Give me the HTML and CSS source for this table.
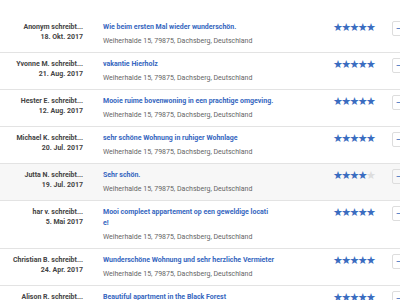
FILE: index.html
```html
<!DOCTYPE html>
<html lang="de">
<head>
    <meta charset="UTF-8">
    <meta name="viewport" content="width=device-width, initial-scale=1.0">
    <title>Bewertungen</title>
    <link rel="stylesheet" href="styles.css">
</head>
<body>
    <div class="reviews">
        <div class="review">
            <div class="author">
                <div class="name">Anonym schreibt...</div>
                <div class="date">18. Okt. 2017</div>
            </div>
            <div class="content">
                <div class="title">Wie beim ersten Mal wieder wunderschön.</div>
                <div class="address">Weiherhalde 15, 79875, Dachsberg, Deutschland</div>
            </div>
            <div class="rating">★★★★★</div>
            <div class="more">→</div>
        </div>
        <div class="review">
            <div class="author">
                <div class="name">Yvonne M. schreibt...</div>
                <div class="date">21. Aug. 2017</div>
            </div>
            <div class="content">
                <div class="title">vakantie Hierholz</div>
                <div class="address">Weiherhalde 15, 79875, Dachsberg, Deutschland</div>
            </div>
            <div class="rating">★★★★★</div>
            <div class="more">→</div>
        </div>
        <div class="review">
            <div class="author">
                <div class="name">Hester E. schreibt...</div>
                <div class="date">12. Aug. 2017</div>
            </div>
            <div class="content">
                <div class="title">Mooie ruime bovenwoning in een prachtige omgeving.</div>
                <div class="address">Weiherhalde 15, 79875, Dachsberg, Deutschland</div>
            </div>
            <div class="rating">★★★★★</div>
            <div class="more">→</div>
        </div>
        <div class="review">
            <div class="author">
                <div class="name">Michael K. schreibt...</div>
                <div class="date">20. Jul. 2017</div>
            </div>
            <div class="content">
                <div class="title">sehr schöne Wohnung in ruhiger Wohnlage</div>
                <div class="address">Weiherhalde 15, 79875, Dachsberg, Deutschland</div>
            </div>
            <div class="rating">★★★★★</div>
            <div class="more">→</div>
        </div>
        <div class="review hover">
            <div class="author">
                <div class="name">Jutta N. schreibt...</div>
                <div class="date">19. Jul. 2017</div>
            </div>
            <div class="content">
                <div class="title">Sehr schön.</div>
                <div class="address">Weiherhalde 15, 79875, Dachsberg, Deutschland</div>
            </div>
            <div class="rating">★★★★<span class="off">★</span></div>
            <div class="more">→</div>
        </div>
        <div class="review">
            <div class="author">
                <div class="name">har v. schreibt...</div>
                <div class="date">5. Mai 2017</div>
            </div>
            <div class="content">
                <div class="title narrow">Mooi compleet appartement op een geweldige locatie!</div>
                <div class="address">Weiherhalde 15, 79875, Dachsberg, Deutschland</div>
            </div>
            <div class="rating">★★★★★</div>
            <div class="more">→</div>
        </div>
        <div class="review">
            <div class="author">
                <div class="name">Christian B. schreibt...</div>
                <div class="date">24. Apr. 2017</div>
            </div>
            <div class="content">
                <div class="title">Wunderschöne Wohnung und sehr herzliche Vermieter</div>
                <div class="address">Weiherhalde 15, 79875, Dachsberg, Deutschland</div>
            </div>
            <div class="rating">★★★★★</div>
            <div class="more">→</div>
        </div>
        <div class="review">
            <div class="author">
                <div class="name">Alison R. schreibt...</div>
                <div class="date">1. Apr. 2017</div>
            </div>
            <div class="content">
                <div class="title">Beautiful apartment in the Black Forest</div>
                <div class="address">Weiherhalde 15, 79875, Dachsberg, Deutschland</div>
            </div>
            <div class="rating">★★★★★</div>
            <div class="more">→</div>
        </div>
    </div>
</body>
</html>
```

FILE: styles.css
```css
body {
    margin: 0;
    padding-top: 16px;
    font-family: Roboto, "Liberation Sans", Arial, sans-serif;
    background: #fff;
    overflow: hidden;
}
.reviews {
    width: 440px;
}
.review {
    display: flex;
    align-items: flex-start;
    padding: 6px 0 5px;
    border-bottom: 1px solid #e3e3e3;
}
.review.hover {
    background: #f7f7f7;
}
.author {
    width: 83px;
    flex-shrink: 0;
    text-align: right;
    font-size: 7px;
    font-weight: bold;
    color: #444;
    line-height: 10px;
}
.content {
    width: 176px;
    flex-shrink: 0;
    margin-left: 20px;
}
.title {
    font-size: 7px;
    font-weight: bold;
    color: #3566c0;
    line-height: 11px;
    word-break: break-all;
}
.title.narrow {
    max-width: 167px;
}
.address {
    margin-top: 3px;
    font-size: 7px;
    color: #666;
    line-height: 11px;
}
.rating {
    margin-left: 54px;
    width: 40px;
    flex-shrink: 0;
    font-family: "DejaVu Sans", sans-serif;
    font-size: 11px;
    letter-spacing: -1.6px;
    line-height: 11px;
    color: #3a6cc0;
    white-space: nowrap;
}
.rating .off {
    color: #ddd;
}
.more {
    margin-left: 19px;
    margin-top: -1px;
    width: 20px;
    height: 13px;
    border: 1px solid #ddd;
    border-radius: 2px;
    font-family: "DejaVu Sans", sans-serif;
    font-size: 9px;
    line-height: 13px;
    color: #3a6cc0;
    padding-left: 3px;
    flex-shrink: 0;
}
```
